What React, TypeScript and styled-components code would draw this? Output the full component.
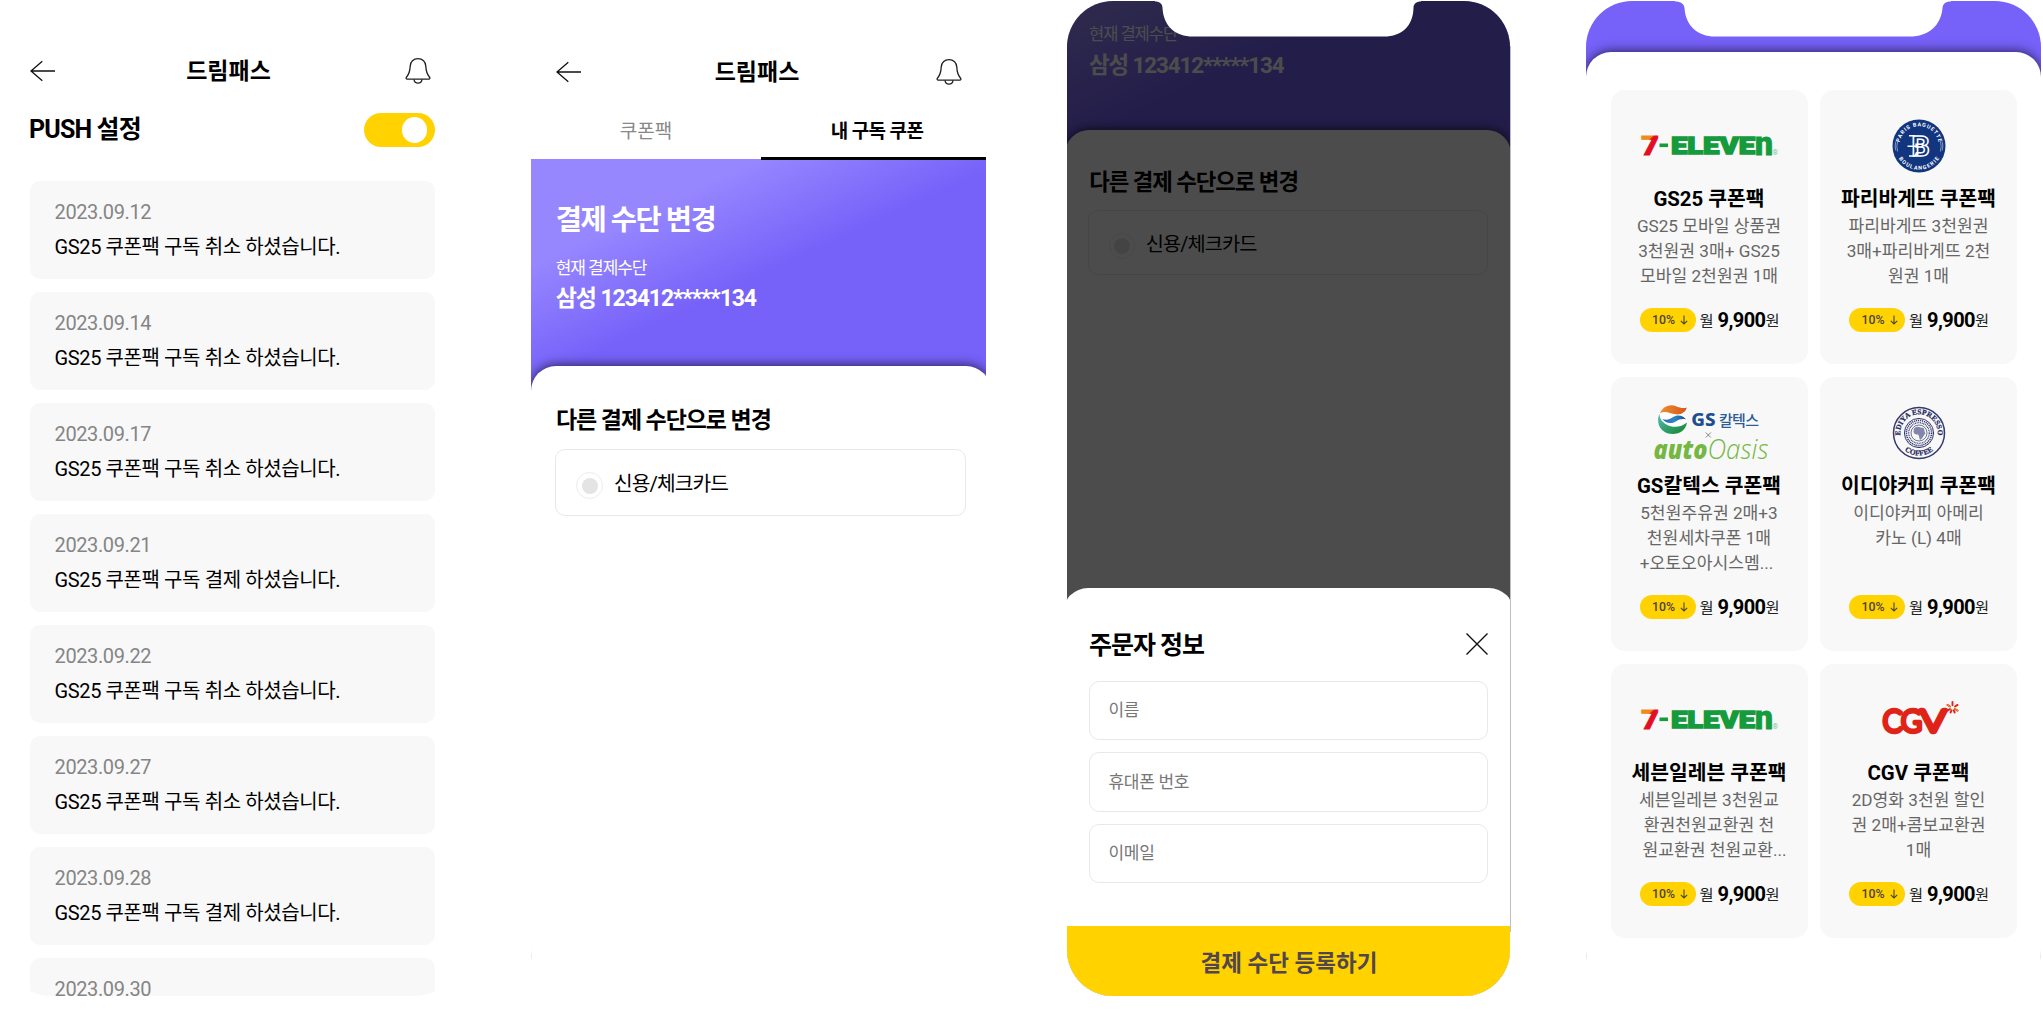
import React from 'react';
import styled, { createGlobalStyle } from 'styled-components';

const GlobalStyle = createGlobalStyle`
  * { box-sizing: border-box; }
  body {
    margin: 0;
    background: #fff;
    color: #000;
    font-family: Roboto, "Noto Sans CJK KR", sans-serif;
    overflow: hidden;
  }
`;

const Board = styled.main`
  display: flex;
  width: 2043px;
  height: 1025px;
  padding: 1px 0 0 5px;
`;

const Phone = styled.section<{ $width: number; $gap: number; $round?: boolean }>`
  position: relative;
  flex: none;
  display: flex;
  flex-direction: column;
  width: ${p => p.$width}px;
  height: 995px;
  margin-right: ${p => p.$gap}px;
  overflow: hidden;
  border-radius: ${p => (p.$round ? '46px' : '0 0 46px 46px')};
`;

const Text = styled.p<{ $size: number; $line: number; $weight?: number; $spacing?: number; $color?: string }>`
  margin: 0;
  font-size: ${p => p.$size}px;
  line-height: ${p => p.$line}px;
  font-weight: ${p => p.$weight ?? 400};
  letter-spacing: ${p => p.$spacing ?? 0}px;
  color: ${p => p.$color ?? '#000'};
  white-space: nowrap;
`;

/* ---------- header ---------- */

const HeaderBar = styled.header<{ $top: number; $right: number }>`
  flex: none;
  display: grid;
  grid-template-columns: 26px 1fr 26px;
  align-items: center;
  height: 40px;
  margin: ${p => p.$top}px ${p => p.$right}px 0 25px;
`;

const HeaderTitle = styled.h1`
  margin: 1px 4px 0 0;
  font-size: 23px;
  font-weight: 700;
  line-height: 38px;
  text-align: center;
`;

const BackIcon = () => (
  <svg width="26" height="22" viewBox="0 0 26 22" fill="none" stroke="#111" strokeWidth="1.3">
    <path d="M12.3 1.2 1 11l11.3 9.8M1 11h24" />
  </svg>
);

const BellIcon = () => (
  <svg width="26" height="28" viewBox="0 0 26 28" fill="none" stroke="#222" strokeWidth="1.3" strokeLinejoin="round">
    <path d="M13 1.7c-4.600 0-7.600 3.200-7.800 7.400-.2 4.600-.6 7.300-3.600 10.900-.9 1.200-.5 2.200.7 2.200h21.400c1.200 0 1.600-1 .7-2.200-3-3.600-3.400-6.300-3.600-10.900C20.600 4.900 17.600 1.700 13 1.700Z" />
    <path d="M9 22.400c.3 2.200 1.800 3.800 4 3.800s3.700-1.600 4-3.800" />
  </svg>
);

const Header = ({ top, right }: { top: number; right: number }) => (
  <HeaderBar $top={top} $right={right}>
    <BackIcon />
    <HeaderTitle>드림패스</HeaderTitle>
    <BellIcon />
  </HeaderBar>
);

/* ---------- push list ---------- */

const PushRow = styled.div`
  flex: none;
  display: flex;
  align-items: center;
  justify-content: space-between;
  height: 40px;
  margin: 19px 25px 0 24px;
`;

const Toggle = styled.div`
  display: flex;
  align-items: center;
  justify-content: flex-end;
  width: 71px;
  height: 34px;
  padding-right: 8px;
  border-radius: 17px;
  background: #ffd200;
`;

const Knob = styled.span`
  width: 25.5px;
  height: 25.5px;
  border-radius: 50%;
  background: #fff;
`;

const PushList = styled.div`
  display: flex;
  flex-direction: column;
  gap: 13px;
  margin: 31px 25px 0;
`;

const PushCard = styled.article`
  flex: none;
  height: 98px;
  padding: 14px 0 0 24.6px;
  border-radius: 10px;
  background: #f8f8f8;
`;

const pushes = [
  ['2023.09.12', '취소'],
  ['2023.09.14', '취소'],
  ['2023.09.17', '취소'],
  ['2023.09.21', '결제'],
  ['2023.09.22', '취소'],
  ['2023.09.27', '취소'],
  ['2023.09.28', '결제'],
  ['2023.09.30', '취소'],
];

/* ---------- payment change ---------- */

const Tabs = styled.nav`
  flex: none;
  display: grid;
  grid-template-columns: 230px 1fr;
  height: 66.5px;
`;

const Tab = styled.div<{ $active?: boolean }>`
  position: relative;
  z-index: 1;
  display: flex;
  align-items: center;
  justify-content: center;
  padding: 13px 0 0 ${p => (p.$active ? 7 : 0)}px;
  ${p => p.$active && `
    &::after {
      content: '';
      position: absolute;
      left: 0;
      right: 0;
      bottom: -1.5px;
      height: 3px;
      background: #000;
    }
  `}
`;

const Hero = styled.div`
  flex: none;
  height: 233px;
  padding: 42.5px 0 0 24.8px;
  background: linear-gradient(155deg, #9787ff 95px, #7661f9 205px);
`;

const Sheet = styled.div<{ $lift: number; $over: number; $pad: string }>`
  position: relative;
  flex: none;
  width: calc(100% + ${p => p.$over}px);
  height: 1000px;
  margin-top: -${p => p.$lift}px;
  padding: ${p => p.$pad};
  border-radius: 25px 25px 0 0;
  background: #fff;
  box-shadow: 0 -1px 11px rgba(0, 0, 0, 0.65);
`;

const Option = styled.div`
  display: flex;
  align-items: center;
  gap: 11px;
  width: 411px;
  height: 67.5px;
  margin: 13px 0 0 -1px;
  padding: 4px 0 0 20px;
  border: 1.5px solid #e8e8e8;
  border-radius: 10px;
`;

const Radio = styled.span`
  display: grid;
  place-items: center;
  width: 27px;
  height: 27px;
  margin-top: 3px;
  border: 1.5px solid #ececec;
  border-radius: 50%;
  &::before {
    content: '';
    width: 16px;
    height: 16px;
    border-radius: 50%;
    background: #e4e4e4;
  }
`;

const Gap = styled.div<{ $h: number }>`
  height: ${p => p.$h}px;
`;

const PaymentChange = ({ over, pad }: { over: number; pad: string }) => (
  <>
    <Hero>
      <Text $size={28.5} $line={40} $weight={700} $spacing={-1.5} $color="#fff">결제 수단 변경</Text>
      <Gap $h={15} />
      <Text $size={17} $line={24} $spacing={-1.07} $color="#fff">현재 결제수단</Text>
      <Gap $h={4} />
      <Text $size={23} $line={30} $weight={700} $spacing={-1.11} $color="#fff">삼성 123412*****134</Text>
    </Hero>
    <Sheet $lift={25.5} $over={over} $pad={pad}>
      <Text $size={23} $line={30} $weight={700} $spacing={-1.08}>다른 결제 수단으로 변경</Text>
      <Option>
        <Radio />
        <Text $size={20.3} $line={28} $spacing={-0.9}>신용/체크카드</Text>
      </Option>
    </Sheet>
  </>
);

const ScrolledScreen = styled.div`
  display: flex;
  flex-direction: column;
  flex: none;
  width: 459px;
  margin: -74.5px 0 0 -2.2px;
  zoom: 0.973;
`;

const Dim = styled.div`
  position: absolute;
  inset: 0;
  background: rgba(0, 0, 0, 0.7);
`;

const Notch = styled.svg`
  position: absolute;
  top: -1px;
  left: 0;
`;

/* ---------- order form ---------- */

const OrderSheet = styled.form`
  position: absolute;
  left: -4px;
  right: -4px;
  top: 586.5px;
  bottom: 0;
  display: flex;
  flex-direction: column;
  padding: 37px 26px 0 26px;
  border-radius: 25px 25px 0 0;
  background: #fff;
`;

const OrderHead = styled.div`
  display: flex;
  align-items: center;
  justify-content: space-between;
  height: 42px;
`;

const CloseIcon = styled.svg`
  margin-bottom: 3px;
`;

const Fields = styled.div`
  display: flex;
  flex-direction: column;
  gap: 12px;
  margin-top: 14px;
`;

const Field = styled.div`
  display: flex;
  align-items: center;
  height: 59.5px;
  padding-left: 18.5px;
  border: 1.5px solid #e8e8e8;
  border-radius: 10px;
`;

const Submit = styled.div`
  position: absolute;
  left: 0;
  right: 0;
  bottom: 0;
  display: flex;
  justify-content: center;
  height: 70px;
  padding: 19px 0 0 1px;
  background: #ffd200;
`;

const EdgeLine = styled.div`
  flex: none;
  width: 1px;
  height: 886px;
  margin: 45px 75px 0 -81px;
  background: #bdbdc4;
`;

/* ---------- coupon grid ---------- */

const PurpleTop = styled.div`
  flex: none;
  height: 76px;
  background: #7661f9;
`;

const CouponGrid = styled.div`
  display: grid;
  grid-template-columns: 197px 197px;
  grid-auto-rows: 274px;
  gap: 13px 12.5px;
`;

const CouponCard = styled.article`
  display: flex;
  flex-direction: column;
  align-items: center;
  padding-top: 21px;
  border-radius: 14px;
  background: #f8f8f8;
`;

const LogoSlot = styled.div`
  display: flex;
  align-items: center;
  justify-content: center;
  height: 70px;
  margin-bottom: 4px;
`;

const Desc = styled.div`
  height: 77px;
  margin-top: -0.5px;
  text-align: center;
`;

const DescLine = styled(Text)<{ $shift?: number }>`
  padding-left: ${p => Math.max(0, p.$shift ?? 0)}px;
  padding-right: ${p => Math.max(0, -(p.$shift ?? 0))}px;
`;

const PriceRow = styled.div`
  display: flex;
  align-items: center;
  margin: 16.5px 0 0 1px;
`;

const Pill = styled.span`
  display: flex;
  align-items: center;
  gap: 5px;
  width: 56px;
  height: 23.5px;
  margin-right: 4px;
  padding-left: 12.5px;
  border-radius: 12px;
  background: #ffd200;
  color: #4d4335;
  font-size: 12.3px;
  font-weight: 500;
`;

const Unit = styled.span`
  padding-top: 2px;
  font-size: 15.3px;
  line-height: 24px;
  color: #222;
`;

const Amount = styled.strong`
  margin-left: 4px;
  font-size: 20px;
  font-weight: 700;
  letter-spacing: -0.6px;
  line-height: 24px;
`;

const DownArrow = () => (
  <svg width="8" height="10" viewBox="0 0 8 10" fill="none" stroke="#4d4335" strokeWidth="1.1">
    <path d="M4 .5v8.500M.8 5.800 4 9l3.200-3.200" />
  </svg>
);

/* ---------- brand logos ---------- */

const SevenEleven = () => (
  <svg width="140" height="28" viewBox="-1 0 140 28" fontFamily="Roboto, sans-serif" fontWeight="900">
    <defs>
      <linearGradient id="seven" x1="0" y1="0" x2="0.55" y2="1">
        <stop offset="0.4" stopColor="#f08a1d" />
        <stop offset="0.46" stopColor="#e2101f" />
      </linearGradient>
    </defs>
    <text x="1" y="22.500" fontSize="26" textLength="18" lengthAdjust="spacingAndGlyphs" fill="url(#seven)" stroke="url(#seven)" strokeWidth="0.8">7</text>
    <rect x="19.500" y="11.500" width="8.500" height="3.600" fill="#159a3c" />
    <text x="31" y="22.200" fontSize="24.400" textLength="84" lengthAdjust="spacingAndGlyphs" fill="#159a3c" stroke="#159a3c" strokeWidth="1.500">ELEVE</text>
    <text x="115" y="22.500" fontSize="33.500" textLength="18" lengthAdjust="spacingAndGlyphs" fill="#159a3c" stroke="#159a3c" strokeWidth="0.8">n</text>
    <text x="132.500" y="22.800" fontSize="7" fontWeight="400" fill="#7fc392">®</text>
  </svg>
);

const ParisBaguette = () => (
  <svg width="54" height="54" viewBox="0 0 54 54" fontFamily="Roboto, sans-serif" textAnchor="middle">
    <defs>
      <path id="pb-top" d="M7.200 27a19.800 19.800 0 0 1 39.600 0" />
      <path id="pb-bottom" d="M3.300 27a23.700 23.700 0 0 0 47.400 0" />
    </defs>
    <circle cx="27" cy="27" r="26.500" fill="#11357f" />
    <g fill="#fff" fontSize="5.400" fontWeight="700">
      <text><textPath href="#pb-top" startOffset="50%" textLength="54">PARIS BAGUETTE</textPath></text>
      <text><textPath href="#pb-bottom" startOffset="50%" textLength="48">BOULANGERIE</textPath></text>
    </g>
    <g fill="none" stroke="#9fb0d2" strokeWidth="0.8">
      <path d="M5.600 22.500q-1.600 4.500 0 10M3.800 22.500q-1.400 4.500 0 9M48.400 22.500q1.600 4.500 0 10M50.200 22.500q1.400 4.500 0 9" />
    </g>
    <text x="28.500" y="37" fontSize="28.500" fontWeight="700" fill="#11357f" stroke="#fff" strokeWidth="1.500">B</text>
    <path d="M15.500 27.200h8.500M17 16.800h6M17 37h6" stroke="#fff" strokeWidth="1.500" />
  </svg>
);

const GsCaltex = () => (
  <svg width="124" height="60" viewBox="0 0 124 60">
    <defs>
      <linearGradient id="gs-orange" x1="0" y1="0" x2="1" y2="0">
        <stop offset="0" stopColor="#ee8f2b" />
        <stop offset="1" stopColor="#d4571f" />
      </linearGradient>
      <linearGradient id="gs-green" x1="0" y1="0" x2="1" y2="1">
        <stop offset="0" stopColor="#52bdb4" />
        <stop offset="0.8" stopColor="#1f8f45" />
      </linearGradient>
      <linearGradient id="gs-blue" x1="0" y1="0" x2="1" y2="0">
        <stop offset="0" stopColor="#2a67b0" />
        <stop offset="0.5" stopColor="#2f86c8" />
        <stop offset="1" stopColor="#1b4f95" />
      </linearGradient>
    </defs>
    <circle cx="25.800" cy="16.500" r="14.200" fill="#fff" />
    <path d="M13 10.500C15.500 3.500 23 .8 29 3.200c4 1.600 7.500 2.400 10.800 1.300-1.300 5-6 7.500-11.300 6.800C23 10.500 17.500 7 13 10.500Z" fill="url(#gs-orange)" />
    <path d="M12.300 10.800C8.500 21 14.500 31 25.500 31c8 0 13.300-4.300 14.500-11.500-4.500 3.800-10.500 5.300-16.300 3.800-6.200-1.600-11-6-11.400-12.500Z" fill="url(#gs-green)" />
    <path d="M15.500 16c4 1.800 7.200.3 10.200-1.700 4.200-2.800 10.300-2.500 13.300 2.200-3.500-1-6.800-.3-9.800 1.700-4.700 3.100-10.700 2.300-13.700-2.200Z" fill="url(#gs-blue)" />
    <text x="44.300" y="23" fontFamily="Noto Sans, sans-serif" fontSize="18.500" fontWeight="800" fill="#1d4f8f" textLength="24.200" lengthAdjust="spacingAndGlyphs">GS</text>
    <text x="72" y="22.500" fontFamily="Noto Sans CJK KR, sans-serif" fontSize="15" fontWeight="500" fill="#2e5c97" textLength="40">칼텍스</text>
    <path d="M58.800 29.500l5 5M63.800 29.500l-5 5" stroke="#777" strokeWidth="0.9" />
    <g fill="#74b843" fontFamily="Open Sans, Noto Sans, sans-serif" fontStyle="italic">
      <text x="6.500" y="56.300" fontSize="26" fontWeight="800" textLength="54" lengthAdjust="spacingAndGlyphs">auto</text>
      <text x="60.500" y="56.300" fontSize="28" fontWeight="300" textLength="61" lengthAdjust="spacingAndGlyphs">Oasis</text>
    </g>
  </svg>
);

const Ediya = () => (
  <svg width="54" height="54" viewBox="0 0 54 54" fontFamily="Liberation Serif, serif" textAnchor="middle">
    <defs>
      <path id="ed-top" d="M8.600 31a18.800 18.800 0 1 1 36.800 0" />
      <path id="ed-bottom" d="M4.500 27a22.500 22.500 0 0 0 45 0" />
    </defs>
    <g fill="none" stroke="#34386c">
      <circle cx="27" cy="27" r="25.500" strokeWidth="1.500" />
      <circle cx="27" cy="27" r="14.600" strokeWidth="1" />
      <circle cx="27" cy="27" r="12.600" strokeWidth="1.600" strokeDasharray="1.200 0.800" />
      <circle cx="27" cy="27" r="10.300" strokeWidth="1.200" strokeDasharray="1 0.700" />
      <circle cx="27" cy="27" r="8" strokeWidth="0.700" />
    </g>
    <path d="M22 22.500c2-2.500 5-2 6.500-1l3 .5c1.500 2 .5 4 2 5.500-1.500 1-2 3-3.500 5l-2 1.500c-1-2-.5-4-2-5.500-2.500.5-4.500-1-4.500-3Z" fill="#8286ab" />
    <g fill="#262a63" stroke="#262a63" strokeWidth="0.250" fontSize="7.400" fontWeight="700">
      <text><textPath href="#ed-top" startOffset="50%" textLength="63">EDIYA ESPRESSO</textPath></text>
      <text><textPath href="#ed-bottom" startOffset="50%" textLength="31">COFFEE</textPath></text>
    </g>
  </svg>
);

const Cgv = () => (
  <svg width="80" height="40" viewBox="0 0 80 40">
    <g fontFamily="Lato, sans-serif" fontSize="30.500" fontWeight="300" fill="#df2318" stroke="#df2318" strokeWidth="4.400" strokeLinejoin="round">
      <text x="3.800" y="32.300" textLength="19.500" lengthAdjust="spacingAndGlyphs">C</text>
      <text x="22" y="32.300" textLength="21" lengthAdjust="spacingAndGlyphs">G</text>
      <text x="41.500" y="32.300" textLength="25.500" lengthAdjust="spacingAndGlyphs">V</text>
    </g>
    <g stroke="#df2318" strokeWidth="1.900" strokeLinecap="round">
      <path d="M73.500 5.200V2M76 6.500l2.600-1.600M76 9l2.600 1.600M71 6.500l-2.600-1.600M71 9l-2.600 1.600M72.500 10.300l-1 2.200M74.700 10.300l1 2.200" />
    </g>
    <path d="M71 6.500l-2.600-1.600M76 9l2.600 1.600" stroke="#f08a1d" strokeWidth="1.400" strokeLinecap="round" />
  </svg>
);

interface Coupon {
  name: string;
  logo: React.ReactNode;
  lines: string[];
  shift?: number;
}

const coupons: Coupon[] = [
  { name: 'GS25 쿠폰팩', logo: <SevenEleven />, lines: ['GS25 모바일 상품권', '3천원권 3매+ GS25', '모바일 2천원권 1매'] },
  { name: '파리바게뜨 쿠폰팩', logo: <ParisBaguette />, lines: ['파리바게뜨 3천원권', '3매+파리바게뜨 2천', '원권 1매'] },
  { name: 'GS칼텍스 쿠폰팩', logo: <GsCaltex />, lines: ['5천원주유권 2매+3', '천원세차쿠폰 1매', '+오토오아시스멤...'], shift: -5 },
  { name: '이디야커피 쿠폰팩', logo: <Ediya />, lines: ['이디야커피 아메리', '카노 (L) 4매'] },
  { name: '세븐일레븐 쿠폰팩', logo: <SevenEleven />, lines: ['세븐일레븐 3천원교', '환권천원교환권 천', '원교환권 천원교환...'], shift: 11 },
  { name: 'CGV 쿠폰팩', logo: <Cgv />, lines: ['2D영화 3천원 할인', '권 2매+콤보교환권', '1매'] },
];

export default function App() {
  return (
    <>
      <GlobalStyle />
      <Board>
        <Phone $width={455} $gap={71}>
          <Header top={50} right={29} />
          <PushRow>
            <Text $size={25} $line={40} $weight={700} $spacing={-0.85}>PUSH 설정</Text>
            <Toggle><Knob /></Toggle>
          </PushRow>
          <PushList>
            {pushes.map(([date, kind]) => (
              <PushCard key={date}>
                <Text $size={20} $line={34} $spacing={-0.4} $color="#858585">{date}</Text>
                <Text $size={20} $line={36} $spacing={-0.4}>GS25 쿠폰팩 구독 {kind} 하셨습니다.</Text>
              </PushCard>
            ))}
          </PushList>
        </Phone>

        <Phone $width={455} $gap={81}>
          <Header top={51} right={24} />
          <Tabs>
            <Tab><Text $size={19} $line={28} $color="#888">쿠폰팩</Text></Tab>
            <Tab $active><Text $size={19} $line={28} $weight={700} $spacing={-0.6}>내 구독 쿠폰</Text></Tab>
          </Tabs>
          <PaymentChange over={5} pad="39.5px 0 0 25px" />
        </Phone>

        <Phone $width={443} $gap={81} $round>
          <ScrolledScreen>
            <PaymentChange over={0} pad="38.5px 0 0 25px" />
          </ScrolledScreen>
          <Dim />
          <OrderSheet>
            <OrderHead>
              <Text $size={25} $line={42} $weight={700} $spacing={-1.05}>주문자 정보</Text>
              <CloseIcon width="22" height="22" viewBox="0 0 22 22" stroke="#111" strokeWidth="1.4">
                <path d="M.5.5l21 21M21.500.5l-21 21" />
              </CloseIcon>
            </OrderHead>
            <Fields>
              {['이름', '휴대폰 번호', '이메일'].map(label => (
                <Field key={label}>
                  <Text $size={17} $line={26} $spacing={-0.3} $color="#777">{label}</Text>
                </Field>
              ))}
            </Fields>
          </OrderSheet>
          <Submit>
            <Text $size={22.5} $line={36} $weight={700} $color="#51464d">결제 수단 등록하기</Text>
          </Submit>
          <Notch width="443" height="37" viewBox="0 0 443 37">
            <path d="M88 0V1.500C93 1.500 95.500 4 95.500 8C96.500 26 108 36.500 126 36.500H317C335 36.500 346 26 346.500 8C346.500 4 349 1.500 354 1.500V0Z" fill="#fff" />
          </Notch>
        </Phone>
        <EdgeLine />

        <Phone $width={455} $gap={0} $round>
          <PurpleTop />
          <Sheet $lift={25} $over={0} $pad="38px 0 0 24.5px">
            <CouponGrid>
              {coupons.map(c => (
                <CouponCard key={c.name}>
                  <LogoSlot>{c.logo}</LogoSlot>
                  <Text $size={20.4} $line={29} $weight={700}>{c.name}</Text>
                  <Desc>
                    {c.lines.map((line, i) => (
                      <DescLine key={line} $size={17.15} $line={25.4} $color="#666" $shift={i === 2 ? c.shift : 0}>{line}</DescLine>
                    ))}
                  </Desc>
                  <PriceRow>
                    <Pill>10%<DownArrow /></Pill>
                    <Unit>월</Unit>
                    <Amount>9,900</Amount>
                    <Unit>원</Unit>
                  </PriceRow>
                </CouponCard>
              ))}
            </CouponGrid>
          </Sheet>
          <Notch width="455" height="37" viewBox="0 0 455 37">
            <path d="M89 0V1.500C95 1.500 98 4 98.500 8C99.500 26 112 36.500 129 36.500H324C342 36.500 355 26 356.500 8C357 4 359 1.500 365 1.500V0Z" fill="#fff" />
          </Notch>
        </Phone>
      </Board>
    </>
  );
}
